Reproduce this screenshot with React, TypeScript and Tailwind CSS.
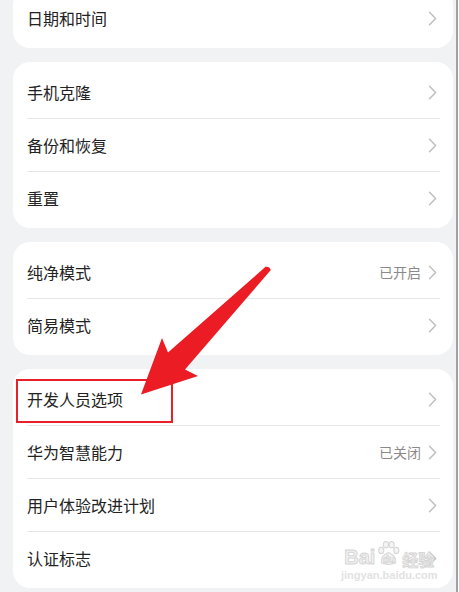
import React from "react";

type Row = { label: string; value?: string };

const Chevron = () => (
  <svg width="9" height="15" viewBox="0 0 9 15" className="shrink-0">
    <path d="M1.5 1.2 L7.6 7.5 L1.5 13.8" fill="none" stroke="#bdbdbd" strokeWidth="1.4" strokeLinecap="round" strokeLinejoin="round" />
  </svg>
);

const Card = ({ rows, className = "" }: { rows: Row[]; className?: string }) => (
  <div className={"ml-[13px] w-[440px] rounded-[17px] bg-white py-[4px] " + className}>
    {rows.map((r, i) => (
      <div key={r.label}>
        {i > 0 && <div className="ml-[14px] mr-[13px] h-px bg-[#e6e6e6]" />}
        <div className="flex h-[52px] items-center pl-[14px] pr-[16px]">
          <span className="flex-1 text-[16px] text-[#222222]">{r.label}</span>
          {r.value && <span className="mr-[7px] text-[14px] text-[#8a8a8a]">{r.value}</span>}
          <Chevron />
        </div>
      </div>
    ))}
  </div>
);

export default function App() {
  return (
    <div
      className="relative h-[592px] w-[459px] overflow-hidden bg-[#f1f2f4]"
      style={{ fontFamily: '"Noto Sans CJK SC", "Noto Sans", sans-serif' }}
    >
      <div className="mt-[-12px] flex flex-col gap-[14px]">
        <Card rows={[{ label: "日期和时间" }]} />
        <Card rows={[{ label: "手机克隆" }, { label: "备份和恢复" }, { label: "重置" }]} />
        <Card rows={[{ label: "纯净模式", value: "已开启" }, { label: "简易模式" }]} />
        <Card
          rows={[
            { label: "开发人员选项" },
            { label: "华为智慧能力", value: "已关闭" },
            { label: "用户体验改进计划" },
            { label: "认证标志" },
          ]}
        />
      </div>

      {/* right frame edge */}
      <div className="absolute right-0 top-0 h-full w-[3px] bg-white" />
      <div className="absolute right-[1px] top-0 h-full w-[2px] bg-[#a3a3a3]" />

      {/* red highlight box */}
      <div className="absolute left-[16px] top-[379px] h-[44px] w-[157px] border-2 border-[#e8202a]" />

      {/* red arrow */}
      <svg className="absolute left-0 top-0" width="459" height="592" viewBox="0 0 459 592">
        <path
          d="M265.5 266.8 Q269.5 266 270.8 270 L185 369.5 L198 376 L141 394.5 L162 338 L168 352.5 Z"
          fill="#ec1c24"
        />
      </svg>

      {/* watermark */}
      <div className="absolute left-[341px] top-[540px] flex flex-col items-center">
        <div className="flex items-end">
          <span
            className="text-[20px] font-bold leading-none text-[#f2f2f2]"
            style={{ fontFamily: '"Liberation Sans", sans-serif', WebkitTextStroke: "1px #d6d6d6" }}
          >
            Bai
          </span>
          <span className="relative mx-[1px] flex h-[27px] w-[25px] items-end justify-center">
            <svg className="absolute left-0 top-0" width="25" height="27" viewBox="0 0 24 26">
              <g fill="#f4f4f4" stroke="#d6d6d6" strokeWidth="1">
                <ellipse cx="5" cy="10" rx="2.5" ry="3" />
                <ellipse cx="9.5" cy="4.5" rx="2.5" ry="3" />
                <ellipse cx="15" cy="4.5" rx="2.5" ry="3" />
                <ellipse cx="19.5" cy="10" rx="2.5" ry="3" />
                <path d="M5 22 Q4 15 12 12 Q20 15 19 22 Q12 25 5 22 Z" />
              </g>
            </svg>
            <span
              className="relative mb-[2px] text-[10px] font-bold leading-none text-[#f2f2f2]"
              style={{ fontFamily: '"Liberation Sans", sans-serif', WebkitTextStroke: "0.6px #cfcfcf" }}
            >
              du
            </span>
          </span>
          <span
            className="text-[16px] font-bold leading-none text-[#f2f2f2]"
            style={{ WebkitTextStroke: "0.8px #d3d3d3" }}
          >
            经验
          </span>
        </div>
        <span
          className="mt-[3px] text-[11px] font-bold leading-none text-[#e2e2e2]"
          style={{ fontFamily: '"Liberation Sans", sans-serif' }}
        >
          jingyan.baidu.com
        </span>
      </div>
    </div>
  );
}
